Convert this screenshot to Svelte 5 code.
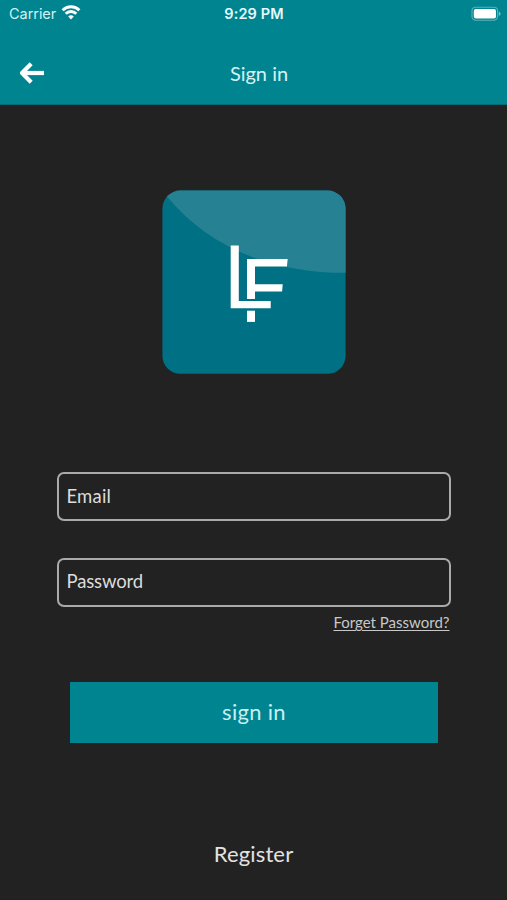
<script lang="ts">
	let email = $state('');
	let password = $state('');
</script>

<div class="screen">
	<header class="header">
		<div class="status">
			<div class="carrier">
				<span>Carrier</span>
				<svg width="20" height="15" viewBox="0 0 20 15" fill="none" stroke="#fff" stroke-width="2.9">
					<path d="M1.6 5.2a11.8 11.8 0 0 1 16.8 0" />
					<path d="M4.7 8.7a7.4 7.4 0 0 1 10.6 0" />
					<path d="M7.2 11.5a4 4 0 0 1 5.6 0L10 14.4z" fill="#fff" stroke="none" />
				</svg>
			</div>
			<span class="time">9:29 PM</span>
			<svg class="battery" width="30" height="16" viewBox="0 0 30 16">
				<rect x="1" y="1.2" width="25.6" height="13" rx="3.6" fill="none" stroke="#5fb0b8" stroke-width="1.1" />
				<rect x="2.8" y="3" width="22.2" height="9.5" rx="2" fill="#fff" />
				<path d="M27.8 5.4c2.4 1 2.4 3.6 0 4.6z" fill="#7cc0c6" />
			</svg>
		</div>
		<div class="nav">
			<button class="back" aria-label="Back">
				<svg width="26" height="22" viewBox="0 0 26 22" fill="none" stroke="#fff" stroke-width="4.2">
					<path d="M25 11H4" />
					<path d="M12.2 1.8L3 11l9.2 9.2" stroke-linejoin="round" />
				</svg>
			</button>
			<h1 class="title">Sign in</h1>
		</div>
	</header>

	<main class="content">
		<svg class="logo" width="184" height="184" viewBox="0 0 184 184" aria-label="LF">
			<defs>
				<clipPath id="tile"><rect x="0.4" y="0.6" width="183.2" height="183.2" rx="18" /></clipPath>
			</defs>
			<g clip-path="url(#tile)">
				<rect width="184" height="184" fill="#007184" />
				<path d="M0 0L5.7 7.2C48 58 110 83 184 82.8V0z" fill="#268293" />
			</g>
			<g fill="#fff">
				<path d="M68.7 55.5h8.1v55.6h31.9v7.1H68.7z" />
				<path d="M85 69h40.7l-.8 7.4H93v17.8h27.7l-.6 7.3H93v7.6h-8z" />
				<path d="M85 120.7h8v11.2h-8z" />
			</g>
		</svg>

		<form class="form" onsubmit={(e) => e.preventDefault()}>
			<input class="field email" type="text" placeholder="Email" bind:value={email} />
			<input class="field password" type="password" placeholder="Password" bind:value={password} />
			<button class="forget" type="button">Forget Password?</button>
			<button class="submit" type="submit">sign in</button>
		</form>

		<button class="register">Register</button>
	</main>
</div>

<style>
	:global(body) {
		background: #222;
	}

	.screen {
		display: flex;
		flex-direction: column;
		box-sizing: border-box;
		height: 900px;
		overflow: hidden;
		background: #222;
		border-bottom: 1px solid #281b22;
		color: #e2e2e2;
		font-family: Lato, 'Open Sans', sans-serif;
	}

	button {
		padding: 0;
		border: 0;
		background: none;
		color: inherit;
		font-family: inherit;
	}

	.header {
		box-sizing: border-box;
		height: 105px;
		flex: none;
		background: #008490;
		border-bottom: 1px solid #066a73;
	}

	.status {
		display: grid;
		grid-template-columns: 1fr auto 1fr;
		align-items: center;
		height: 28px;
		padding: 0 6px 0 9px;
		font-family: Inter, sans-serif;
		font-size: 14.5px;
		line-height: 18px;
		color: #d0f2f4;
	}

	.carrier {
		display: flex;
		align-items: center;
		gap: 5px;
		letter-spacing: -0.05px;
	}

	.carrier svg {
		margin-top: -3px;
	}

	.time {
		margin: 0 2px 0 0;
		font-weight: 600;
		letter-spacing: 0.1px;
		color: #e6fbfb;
	}

	.battery {
		justify-self: end;
		margin-top: -1px;
	}

	.nav {
		display: grid;
		grid-template-columns: 60px 1fr 60px;
		align-items: center;
		height: 76px;
		padding-top: 12px;
		box-sizing: border-box;
	}

	.back {
		display: flex;
		padding: 1px 0 0 19px;
	}

	.title {
		margin: 2px 0 0 11px;
		text-align: center;
		font-size: 20px;
		font-weight: 400;
		color: #d5f3f5;
	}

	.content {
		display: flex;
		flex-direction: column;
		align-items: center;
		padding-top: 85px;
	}

	.logo {
		display: block;
	}

	.form {
		display: flex;
		flex-direction: column;
		width: 394px;
		margin-top: 98px;
	}

	.field {
		box-sizing: border-box;
		width: 100%;
		height: 49px;
		padding: 0 7px 2px 8px;
		border: 2px solid #aaa;
		border-radius: 7px;
		outline: none;
		background: transparent;
		color: #e2e2e2;
		font-family: inherit;
		font-size: 18.5px;
	}

	.field::placeholder {
		color: #dcdcdc;
		opacity: 1;
	}

	.email {
		letter-spacing: 0.2px;
	}

	.password {
		margin-top: 36.5px;
		letter-spacing: -0.15px;
	}

	.forget {
		align-self: flex-end;
		margin: 6.5px 1px 0 0;
		font-size: 15px;
		line-height: 18px;
		color: #c8c8c8;
		text-decoration: underline;
		text-underline-offset: 2px;
	}

	.submit {
		align-self: center;
		width: 368px;
		height: 61px;
		margin: 51px 0 0 1px;
		padding-bottom: 2px;
		background: #008490;
		color: #c6f0f2;
		font-size: 22px;
		letter-spacing: 0.3px;
	}

	.register {
		margin-top: 96px;
		font-size: 22px;
		line-height: 30px;
		letter-spacing: 0.15px;
	}
</style>
